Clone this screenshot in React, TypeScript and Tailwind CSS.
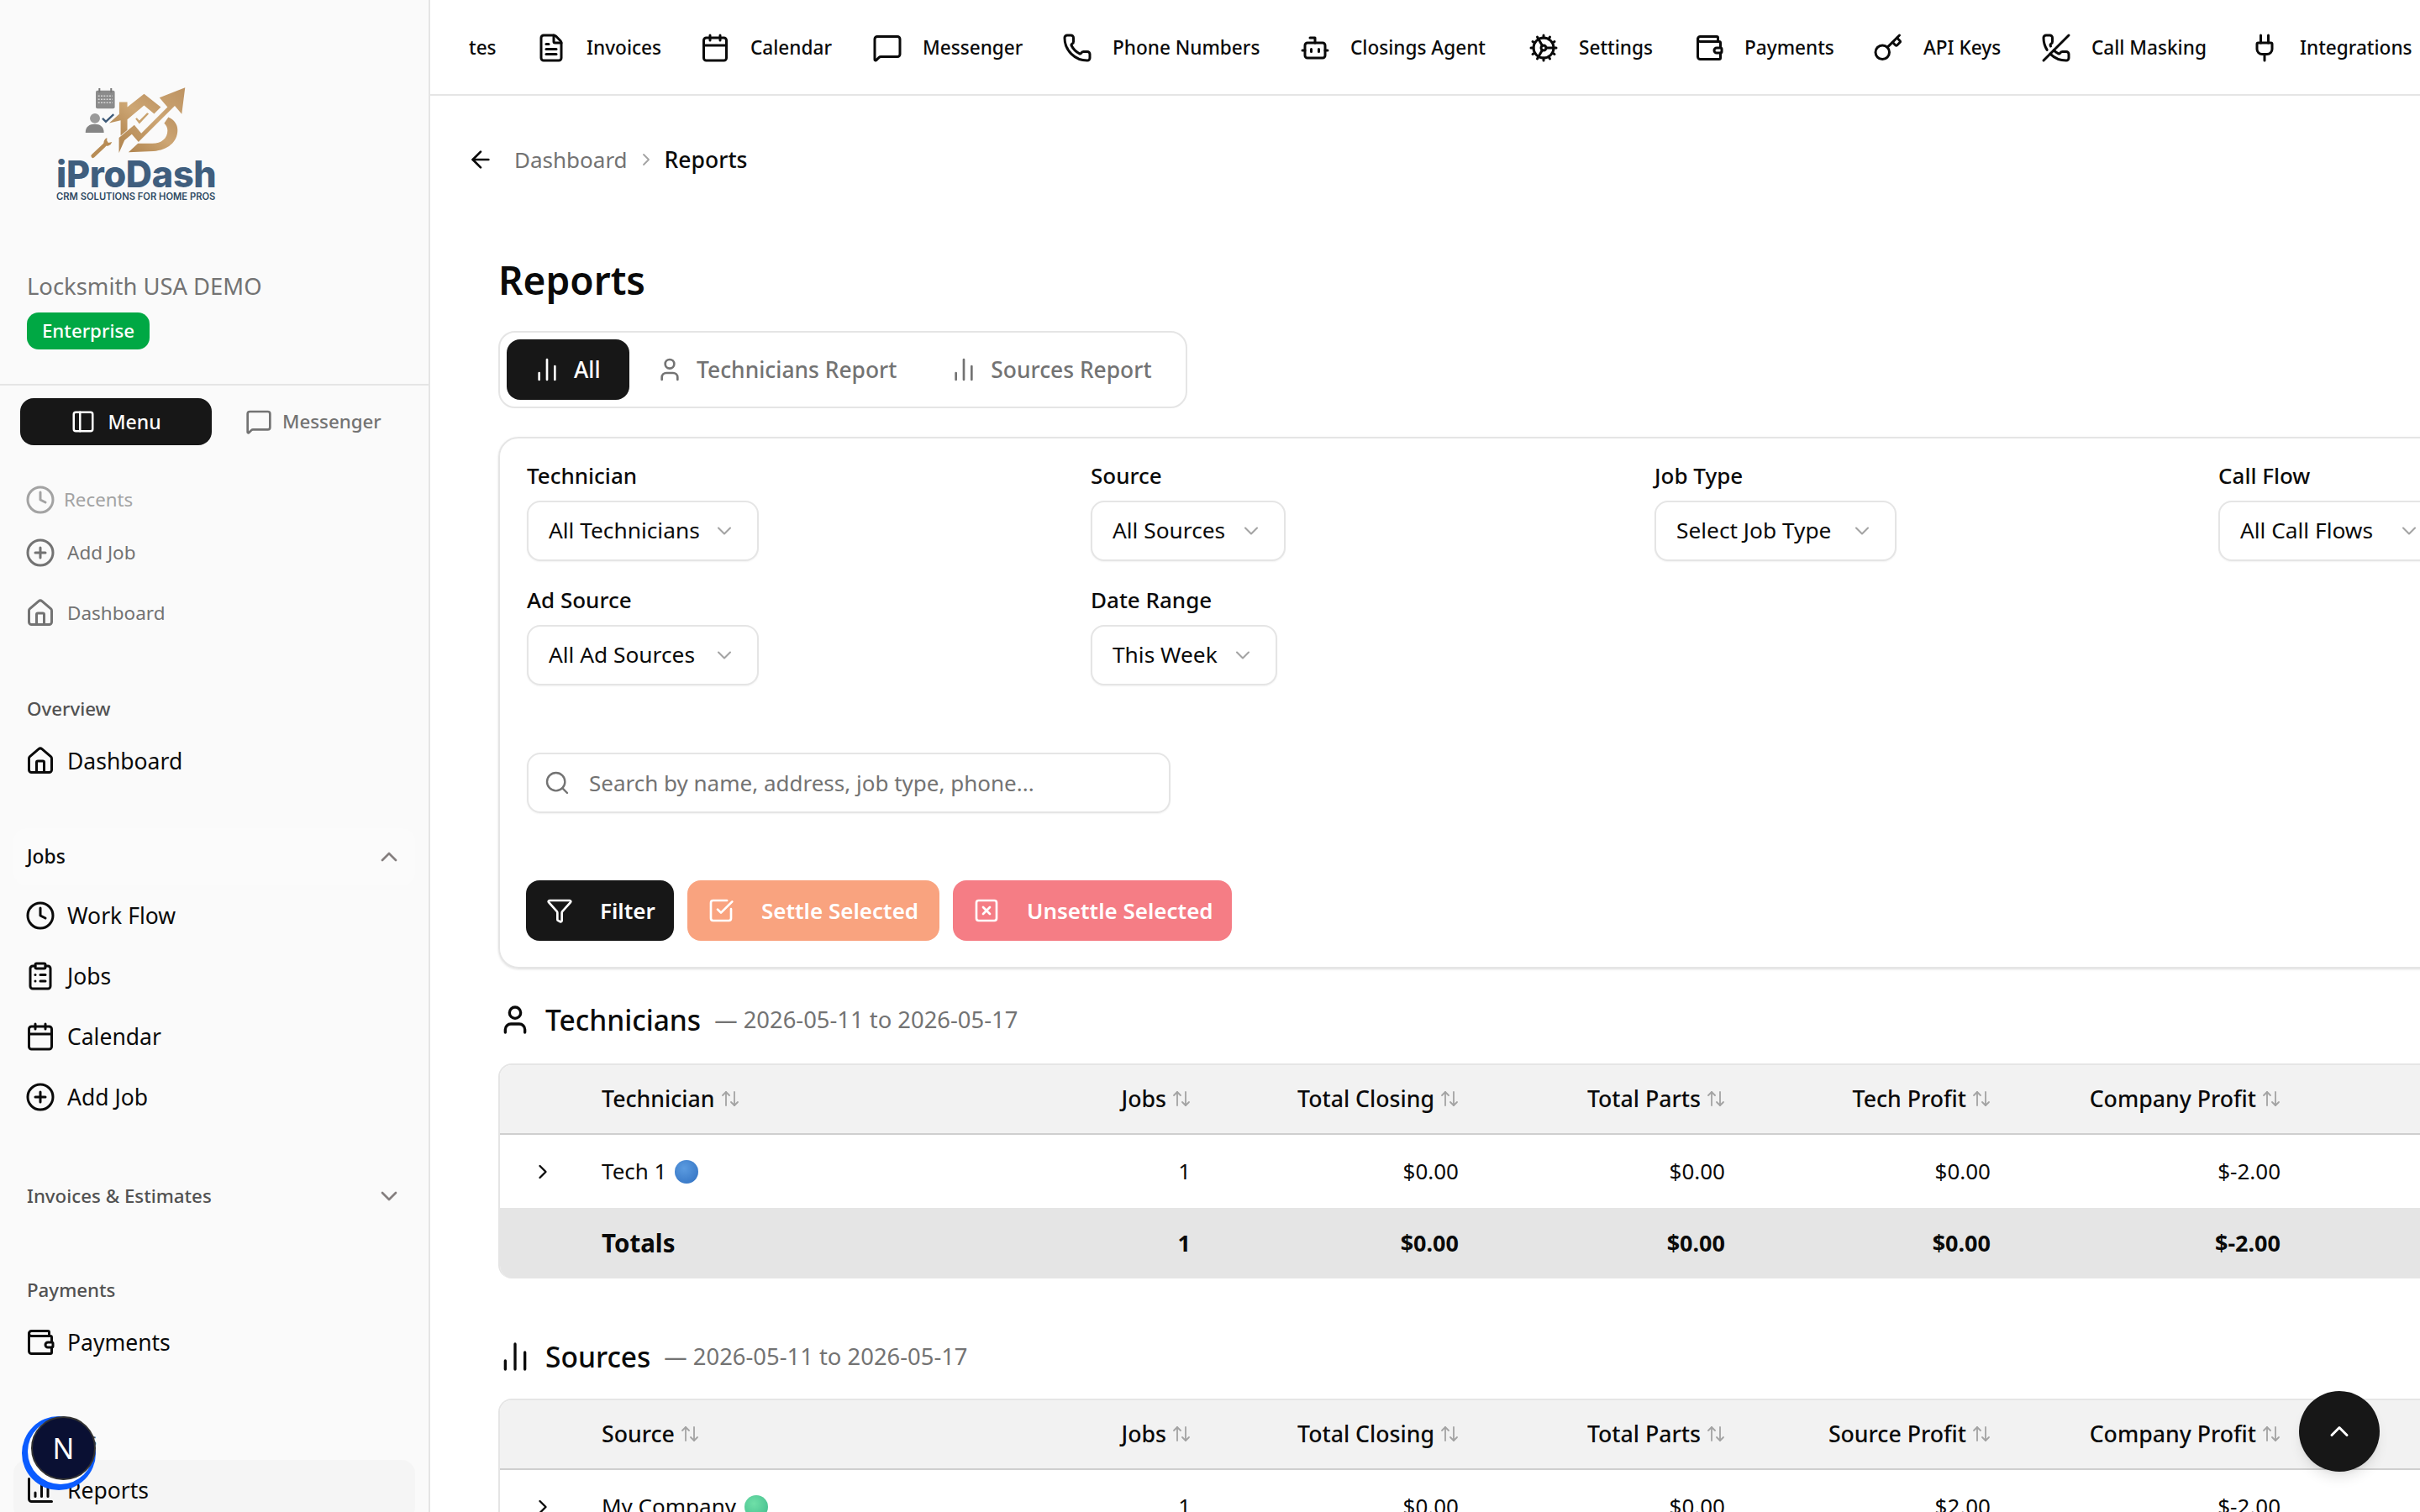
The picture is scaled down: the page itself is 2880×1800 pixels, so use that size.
import React from "react";
import {
  ArrowLeft, ArrowUpDown, Bot, Calendar, ChartColumn, ChartNoAxesColumn, ChevronDown, ChevronRight, ChevronUp,
  CirclePlus, ClipboardList, Clock, Cog, FileText, Funnel, House, Key, MessageSquare, PanelLeft, Phone, PhoneOff, Plug,
  Search, SquareCheckBig, SquareX, User, Wallet,
} from "lucide-react";

function Logo() {
  return (
    <div className="flex flex-col items-start ml-[67px] w-[190px]">
      <svg viewBox="180 66 370 262" width="123" height="87" className="ml-[33px] -mb-[2px]">
        <defs>
          <linearGradient id="gold" x1="0" y1="1" x2="1" y2="0">
            <stop offset="0" stopColor="#b0844e" />
            <stop offset="0.55" stopColor="#cda674" />
            <stop offset="1" stopColor="#bd9362" />
          </linearGradient>
        </defs>
        <rect x="222" y="80" width="68" height="65" rx="6" fill="#8b8b8b" />
        <rect x="232" y="72" width="6" height="16" fill="#777" />
        <rect x="274" y="72" width="6" height="16" fill="#777" />
        <path d="M230 100H282M230 112H282M230 124H282" stroke="#d6d6d6" strokeWidth="5" strokeDasharray="6 4" />
        <circle cx="219" cy="180" r="18" fill="#9a9a9a" />
        <path d="M185 232c0-22 14-31 33-31s33 9 33 31z" fill="#858585" />
        <path d="M246 180l12 12 28-26" fill="none" stroke="#3d5a78" strokeWidth="7" />
        <path d="M212 315l40-38" stroke="#b88c55" strokeWidth="14" strokeLinecap="round" />
        <path d="M262 250a20 20 0 0 0-10 27 20 20 0 0 0 28-12l-13 3-5-8z" fill="#b88c55" />
        <path d="M270 197l36-32v-43h29v18l60-48 60 48-24 24-36-30-60 50v38l-24 20v-55z" fill="url(#gold)" />
        <path d="M364 182l14 18 34-36-6-4-28 28-9-10z" fill="#c9a26e" />
        <path d="M305 304v-54l55-46 25 30 94-94-29-34 92-36-12 95-25-30-130 130-24-28-26 22z" fill="url(#gold)" />
        <path d="M482 176c22 10 33 26 33 46 0 44-36 72-86 76l-90 4 34-32h52c32 0 54-18 54-46 0-10-4-18-12-26z" fill="url(#gold)" />
      </svg>
      <div className="font-['Inter',sans-serif] text-[43.2px] leading-[38px] font-extrabold tracking-[-0.3px] text-[#3f5e7e] whitespace-nowrap">iProDash</div>
      <div className="font-['Inter',sans-serif] text-[11.2px] leading-[14px] mt-[1px] font-semibold text-[#2f4a63] whitespace-nowrap">CRM SOLUTIONS FOR HOME PROS</div>
    </div>
  );
}

type IconT = React.ComponentType<{ size?: number; className?: string; strokeWidth?: number }>;

function NavRow({ icon: Icon, label, muted }: { icon: IconT; label: string; muted?: boolean }) {
  return (
    <div className={"mx-4 h-[72px] pl-[14px] flex items-center gap-[14px] " + (muted ? "text-[22.5px] text-[#737373]" : "text-[26.5px] text-[#0a0a0a]")}>
      <Icon size={36} className="shrink-0" />
      <span className={muted ? "" : "pt-[1px]"}>{label}</span>
    </div>
  );
}

function SectionLabel({ children, className = "" }: { children: React.ReactNode; className?: string }) {
  return <div className={"h-10 pl-8 flex items-center text-[22.3px] font-medium text-[#525252] " + className}>{children}</div>;
}

function Sidebar() {
  return (
    <aside className="w-[512px] h-[1800px] shrink-0 bg-[#fafafa] border-r-2 border-[#e5e5e5] overflow-hidden">
      <div className="h-[459px] border-b-2 border-[#e5e5e5] pt-[103px]">
        <Logo />
        <div className="ml-8 mt-[80px] text-[27.4px] leading-10 text-[#737373] whitespace-nowrap">Locksmith USA DEMO</div>
        <div className="ml-8 mt-[11px] w-[146px] h-11 rounded-[14px] bg-[#00a844] flex items-center justify-center text-[22.3px] font-medium text-white">Enterprise</div>
      </div>

      <div className="mt-[15px] ml-6 flex h-14 items-center">
        <div className="w-[228px] h-14 rounded-[16px] bg-[#171717] text-white flex items-center justify-center gap-[14px] text-[23px] font-medium">
          <PanelLeft size={30} />
          <span>Menu</span>
        </div>
        <div className="ml-[40px] flex items-center gap-3 text-[22.3px] font-medium text-[#737373]">
          <MessageSquare size={32} />
          <span>Messenger</span>
        </div>
      </div>

      <div className="mt-[38px] mx-4 h-[54px] pl-[14px] flex items-center gap-[10px] text-[22.3px] text-[#a3a3a3]">
        <Clock size={36} className="shrink-0" />
        <span>Recents</span>
      </div>
      <NavRow icon={CirclePlus} label="Add Job" muted />
      <NavRow icon={House} label="Dashboard" muted />

      <SectionLabel className="mt-[58px]">Overview</SectionLabel>
      <div className="mt-[6px]"><NavRow icon={House} label="Dashboard" /></div>

      <div className="mt-[44px] mx-4 h-[68px] pl-4 pr-[15px] flex items-center justify-between rounded-[16px] bg-[#fbfbfb] text-[22.8px] font-medium text-[#0a0a0a]">
        <span>Jobs</span>
        <ChevronUp size={32} className="text-[#857f7f]" />
      </div>
      <NavRow icon={Clock} label="Work Flow" />
      <NavRow icon={ClipboardList} label="Jobs" />
      <NavRow icon={Calendar} label="Calendar" />
      <NavRow icon={CirclePlus} label="Add Job" />

      <div className="mt-[48px] mx-4 h-[68px] pl-4 pr-[15px] flex items-center justify-between text-[22.3px] font-medium text-[#525252]">
        <span>Invoices &amp; Estimates</span>
        <ChevronDown size={32} className="text-[#857f7f]" />
      </div>

      <SectionLabel className="mt-[58px]">Payments</SectionLabel>
      <div className="mt-[6px]"><NavRow icon={Wallet} label="Payments" /></div>

      <SectionLabel className="mt-[60px]">Reports</SectionLabel>
      <div className="mt-1 mx-4 h-[72px] pl-[14px] flex items-center gap-[14px] rounded-[16px] bg-[#f5f5f5] text-[26.5px] text-[#0a0a0a]">
        <ChartColumn size={36} className="shrink-0" />
        <span className="pt-[1px]">Reports</span>
      </div>
    </aside>
  );
}

const topItems: { icon: IconT; label: string; width: string }[] = [
  { icon: FileText, label: "Invoices", width: "w-[87px]" },
  { icon: Calendar, label: "Calendar", width: "w-[97px]" },
  { icon: MessageSquare, label: "Messenger", width: "w-[118px]" },
  { icon: Phone, label: "Phone Numbers", width: "w-[175px]" },
  { icon: Bot, label: "Closings Agent", width: "w-[164px]" },
  { icon: Cog, label: "Settings", width: "w-[89px]" },
  { icon: Wallet, label: "Payments", width: "w-[105px]" },
  { icon: Key, label: "API Keys", width: "w-[92px]" },
  { icon: PhoneOff, label: "Call Masking", width: "w-[140px]" },
  { icon: Plug, label: "Integrations", width: "w-[132px]" },
];

function TopBar() {
  return (
    <header className="h-[114px] pt-[2px] border-b-2 border-[#e5e5e5] flex items-center pl-[46px] gap-[48px] overflow-hidden text-[22.6px] font-medium text-[#0a0a0a] whitespace-nowrap">
      <span className="shrink-0 w-[32px]">tes</span>
      {topItems.map(({ icon: Icon, label, width }) => (
        <div key={label} className="flex items-center gap-6 shrink-0">
          <Icon size={36} />
          <span className={width}>{label}</span>
        </div>
      ))}
    </header>
  );
}

function Field({ label, value, width }: { label: string; value: string; width: string }) {
  return (
    <div>
      <div className="h-10 flex items-center text-[26px] font-medium text-[#0a0a0a]">{label}</div>
      <div className={"mt-[10px] h-[72px] rounded-[16px] border-2 border-[#e5e5e5] shadow-xs bg-white pl-6 pr-[25px] flex items-center justify-between text-[26.3px] text-[#0a0a0a] " + width}>
        <span className="whitespace-nowrap">{value}</span>
        <ChevronDown size={28} className="text-[#a3a3a3] shrink-0" strokeWidth={1.8} />
      </div>
    </div>
  );
}

function SortHead({ children, right }: { children: React.ReactNode; right?: boolean }) {
  return (
    <th className={"h-[82px] px-4 text-[26.7px] font-medium text-[#0a0a0a] border-b-2 border-[#cfcfcf] " + (right ? "text-right" : "text-left")}>
      <span className={"inline-flex items-center gap-[6px] " + (right ? "-mr-[1px]" : "")}>
        {children}
        <ArrowUpDown size={24} className="text-[#a3a3a3]" strokeWidth={1.8} />
      </span>
    </th>
  );
}

function ReportTable({ heads, name, dot, values }: { heads: string[]; name: string; dot: string; values: string[] }) {
  return (
    <div className="w-[2500px] rounded-[16px] border-t-2 border-l-2 border-[#e5e5e5] overflow-hidden">
      <table className="table-fixed w-[2498px] border-collapse">
        <colgroup>
          <col className="w-[105px]" />
          <col className="w-[500px]" />
          <col className="w-[233px]" />
          <col className="w-[319px]" />
          <col className="w-[317px]" />
          <col className="w-[316px]" />
          <col className="w-[345px]" />
          <col />
        </colgroup>
        <thead className="bg-[#f2f2f2]">
          <tr>
            <th className="h-[82px] border-b-2 border-[#cfcfcf]" />
            {heads.map((h, i) => (
              <SortHead key={h} right={i > 0}>{h}</SortHead>
            ))}
            <th className="h-[82px] border-b-2 border-[#cfcfcf]" />
          </tr>
        </thead>
        <tbody className="text-[26px] text-[#0a0a0a]">
          <tr className="h-[88px]">
            <td className="pl-[37px]"><ChevronRight size={28} /></td>
            <td className="px-4">
              <span className="inline-flex items-center gap-[10px]">
                {name}
                <span className={"w-7 h-7 rounded-full " + dot} />
              </span>
            </td>
            {values.map((v, i) => (
              <td key={i} className="px-4 text-right">{v}</td>
            ))}
            <td />
          </tr>
          <tr className="h-[84px] bg-[#e5e5e5] font-bold text-[27px]">
            <td />
            <td className="px-4 text-[29.5px]">Totals</td>
            {values.map((v, i) => (
              <td key={i} className="px-4 text-right">{v}</td>
            ))}
            <td />
          </tr>
        </tbody>
      </table>
    </div>
  );
}

function SectionHead({ icon: Icon, title }: { icon: IconT; title: string }) {
  return (
    <div className="h-12 flex items-center gap-4 whitespace-nowrap">
      <Icon size={40} className="text-[#0a0a0a] shrink-0" />
      <span className="text-[33.5px] font-medium text-[#0a0a0a]">{title}</span>
      <span className="text-[27.4px] text-[#737373]">— 2026-05-11 to 2026-05-17</span>
    </div>
  );
}

function Main() {
  return (
    <main className="flex-1 min-w-0 h-[1800px] overflow-hidden bg-white">
      <TopBar />
      <div className="mt-[44px] ml-[44px] h-16 flex items-center text-[26px] whitespace-nowrap">
        <ArrowLeft size={32} className="text-[#0a0a0a]" />
        <span className="ml-6 text-[#737373]">Dashboard</span>
        <ChevronRight size={24} className="mx-[10px] text-[#a3a3a3]" strokeWidth={1.8} />
        <span className="font-medium text-[26.5px] text-[#0a0a0a] pt-[1px]">Reports</span>
      </div>

      <div className="ml-[81px] w-[2500px]">
        <h1 className="mt-[79px] h-16 flex items-center text-[46px] font-semibold text-[#0a0a0a]">Reports</h1>

        <div className="mt-[29px] w-fit h-[92px] rounded-[20px] border-2 border-[#e5e5e5] p-2 flex text-[26.4px] font-medium">
          <div className="h-[72px] w-[146px] pl-8 rounded-[16px] bg-[#171717] text-white flex items-center gap-4">
            <ChartNoAxesColumn size={32} />
            <span className="pt-[1px]">All</span>
          </div>
          <div className="h-[72px] px-8 text-[#737373] flex items-center gap-4">
            <User size={32} />
            <span className="pt-[1px]">Technicians Report</span>
          </div>
          <div className="h-[72px] px-8 text-[#737373] flex items-center gap-4">
            <ChartNoAxesColumn size={32} />
            <span className="pt-[1px]">Sources Report</span>
          </div>
        </div>

        <section className="mt-[34px] h-[633px] rounded-[24px] border-2 border-[#e5e5e5] shadow-sm px-8 pt-6">
          <div className="grid grid-cols-[repeat(4,655px)] gap-x-4 gap-y-[26px]">
            <Field label="Technician" value="All Technicians" width="w-[276px]" />
            <Field label="Source" value="All Sources" width="w-[232px]" />
            <Field label="Job Type" value="Select Job Type" width="w-[288px]" />
            <Field label="Call Flow" value="All Call Flows" width="w-[268px]" />
            <Field label="Ad Source" value="All Ad Sources" width="w-[276px]" />
            <Field label="Date Range" value="This Week" width="w-[222px]" />
          </div>

          <div className="mt-[80px] w-[766px] h-[72px] rounded-[16px] border-2 border-[#e5e5e5] shadow-xs flex items-center pl-[18px] gap-[22px]">
            <Search size={32} className="text-[#737373] shrink-0" strokeWidth={1.8} />
            <input
              placeholder="Search by name, address, job type, phone..."
              className="flex-1 min-w-0 outline-none text-[26px] placeholder:text-[#737373]"
            />
          </div>

          <div className="mt-[80px] -ml-[1px] flex gap-4 text-[26px] font-semibold text-white">
            <div className="h-[72px] w-[176px] pl-6 rounded-[16px] bg-[#171717] flex items-center gap-8">
              <Funnel size={32} />
              <span>Filter</span>
            </div>
            <div className="h-[72px] w-[300px] pl-6 rounded-[16px] bg-[#f9a37f] flex items-center gap-8">
              <SquareCheckBig size={32} />
              <span className="whitespace-nowrap">Settle Selected</span>
            </div>
            <div className="h-[72px] w-[332px] pl-6 rounded-[16px] bg-[#f57d85] flex items-center gap-8">
              <SquareX size={32} />
              <span className="whitespace-nowrap">Unsettle Selected</span>
            </div>
          </div>
        </section>

        <div className="mt-[37px]"><SectionHead icon={User} title="Technicians" /></div>
        <div className="mt-[28px]">
          <ReportTable
            heads={["Technician", "Jobs", "Total Closing", "Total Parts", "Tech Profit", "Company Profit"]}
            name="Tech 1"
            dot="bg-[radial-gradient(circle_at_40%_35%,#5b9be0,#2f6fc0)]"
            values={["1", "$0.00", "$0.00", "$0.00", "$-2.00"]}
          />
        </div>

        <div className="mt-[69px]"><SectionHead icon={ChartNoAxesColumn} title="Sources" /></div>
        <div className="mt-[26px]">
          <ReportTable
            heads={["Source", "Jobs", "Total Closing", "Total Parts", "Source Profit", "Company Profit"]}
            name="My Company"
            dot="bg-[radial-gradient(circle_at_40%_35%,#6fe0a8,#3fb98a)]"
            values={["1", "$0.00", "$0.00", "$2.00", "$-2.00"]}
          />
        </div>
      </div>
    </main>
  );
}

export default function App() {
  return (
    <div className="relative w-[2880px] h-[1800px] overflow-hidden flex bg-white font-['Noto_Sans',sans-serif]">
      <Sidebar />
      <Main />

      <div className="absolute left-[26px] top-[1686px] w-[88px] h-[88px] rounded-full bg-[#0b5cff]">
        <div className="absolute left-[7px] top-[3px] w-[78px] h-[78px] rounded-full bg-white" />
        <div className="absolute left-[11px] top-0 w-[77px] h-[76px] rounded-full bg-[#0a1033] border-2 border-[#333] flex items-center justify-center text-[34px] font-normal text-white">N</div>
      </div>

      <div className="absolute left-[2736px] top-[1656px] w-24 h-24 rounded-full bg-[#171717] shadow-lg flex items-center justify-center text-white">
        <ChevronUp size={36} />
      </div>
    </div>
  );
}
